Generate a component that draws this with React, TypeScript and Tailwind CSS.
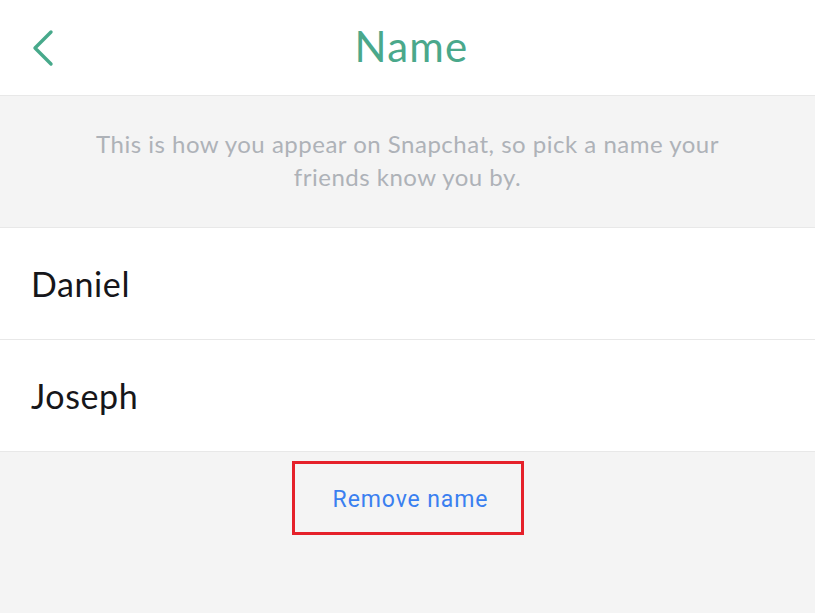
import React from 'react';

const names = ['Daniel', 'Joseph'];

const App: React.FC = () => {
  return (
    <div className="w-[827px] h-[613px] bg-white overflow-hidden">
      <div className="w-[815px] h-full flex flex-col bg-[#f4f4f4]">
        <header className="relative h-[96px] bg-white border-b border-[#e8e8e8] flex items-center justify-center shrink-0">
          <button className="absolute left-[30px] top-[29px] p-0">
            <svg width="26" height="40" viewBox="0 0 26 40" fill="none">
              <path d="M21 3 L5 19 L21 35" stroke="#47a98b" strokeWidth="3.4" strokeLinecap="round" strokeLinejoin="round" />
            </svg>
          </button>
          <h1 className="text-[42px] text-[#4aa88b] font-['Lato',sans-serif] tracking-[1.2px] -mt-[2px] ml-[8px]">Name</h1>
        </header>

        <div className="h-[131px] flex items-center justify-center shrink-0 px-[70px]">
          <p className="max-w-[660px] text-center text-[24px] leading-[33px] text-[#aeb2b8] font-['Lato',sans-serif] tracking-[0.5px] -mt-[3px]">
            This is how you appear on Snapchat, so pick a name your friends know you by.
          </p>
        </div>

        <ul className="bg-white border-t border-[#e8e8e8] shrink-0">
          {names.map((n) => (
            <li
              key={n}
              className="h-[112px] border-b border-[#e8e8e8] flex items-center pl-[31px] text-[34px] text-[#16161a] font-['Lato',sans-serif] tracking-[0.6px] -mt-[0px]"
            >
              {n}
            </li>
          ))}
        </ul>

        <div className="flex justify-center pt-[9px]">
          <button className="w-[232px] h-[74px] border-[3px] border-[#e5202a] flex items-center justify-center text-[23px] text-[#3a7ff0] font-['Roboto',sans-serif] tracking-[0.9px] pt-[4px] pl-[6px]">
            Remove name
          </button>
        </div>
      </div>
    </div>
  );
};

export default App;
